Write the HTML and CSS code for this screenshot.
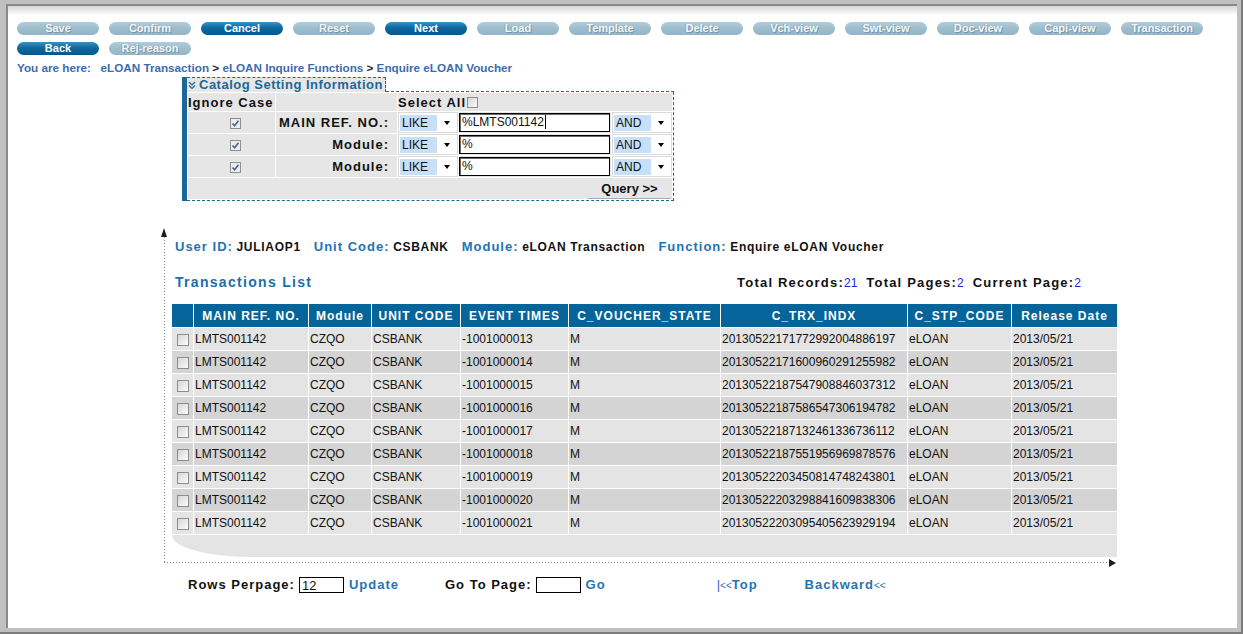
FILE: index.html
```html
<!DOCTYPE html>
<html>
<head>
<meta charset="utf-8">
<title>Enquire eLOAN Voucher</title>
<link rel="stylesheet" href="styles.css">
</head>
<body>
<div class="frame">
 <div class="page">
  <div class="toolbar">
   <div class="btnrow">
    <span class="btn off">Save</span>
    <span class="btn off">Confirm</span>
    <span class="btn on">Cancel</span>
    <span class="btn off">Reset</span>
    <span class="btn on">Next</span>
    <span class="btn off">Load</span>
    <span class="btn off">Template</span>
    <span class="btn off">Delete</span>
    <span class="btn off">Vch-view</span>
    <span class="btn off">Swt-view</span>
    <span class="btn off">Doc-view</span>
    <span class="btn off">Capi-view</span>
    <span class="btn off">Transaction</span>
   </div>
   <div class="btnrow">
    <span class="btn on">Back</span>
    <span class="btn off">Rej-reason</span>
   </div>
  </div>

  <div class="crumbs">You are here:&nbsp;&nbsp; <span>eLOAN Transaction</span> <span class="sep">&gt;</span> <span>eLOAN Inquire Functions</span> <span class="sep">&gt;</span> <span>Enquire eLOAN Voucher</span></div>

  <div class="catalog">
   <div class="cat-head">
    <div class="legend"><svg class="chev" width="8" height="9" viewBox="0 0 8 9"><polyline points="1,1 4,4 7,1" /><polyline points="1,4.5 4,7.5 7,4.5" /></svg>Catalog Setting Information</div>
    <div class="cat-fill"></div>
   </div>
   <div class="cat-body">
    <table class="cat-table">
     <colgroup><col class="c1"><col class="c2"><col class="c3"><col class="c4"><col class="c5"></colgroup>
     <tr class="hrow">
      <td>Ignore Case</td>
      <td></td>
      <td colspan="3">Select All<span class="box sm"></span></td>
     </tr>
     <tr>
      <td class="chk"><span class="box on"><svg width="9" height="9" viewBox="0 0 9 9"><polyline points="1.5,4.5 3.6,6.8 7.5,1.8"/></svg></span></td>
      <td class="lbl">MAIN REF. NO.:</td>
      <td><div class="sel"><span class="hl">LIKE</span><span class="arr"></span></div></td>
      <td><div class="field">%LMTS001142<span class="caret"></span></div></td>
      <td><div class="sel"><span class="hl">AND</span><span class="arr"></span></div></td>
     </tr>
     <tr>
      <td class="chk"><span class="box on"><svg width="9" height="9" viewBox="0 0 9 9"><polyline points="1.5,4.5 3.6,6.8 7.5,1.8"/></svg></span></td>
      <td class="lbl">Module:</td>
      <td><div class="sel"><span class="hl">LIKE</span><span class="arr"></span></div></td>
      <td><div class="field">%</div></td>
      <td><div class="sel"><span class="hl">AND</span><span class="arr"></span></div></td>
     </tr>
     <tr>
      <td class="chk"><span class="box on"><svg width="9" height="9" viewBox="0 0 9 9"><polyline points="1.5,4.5 3.6,6.8 7.5,1.8"/></svg></span></td>
      <td class="lbl">Module:</td>
      <td><div class="sel"><span class="hl">LIKE</span><span class="arr"></span></div></td>
      <td><div class="field">%</div></td>
      <td><div class="sel"><span class="hl">AND</span><span class="arr"></span></div></td>
     </tr>
     <tr class="qrow">
      <td colspan="5"><span class="query">Query &gt;&gt;</span></td>
     </tr>
    </table>
   </div>
  </div>

  <div class="listbox">
   <div class="userinfo"><span class="k">User ID:</span> <span class="v">JULIAOP1</span><span class="k g">Unit Code:</span> <span class="v">CSBANK</span><span class="k g">Module:</span> <span class="v">eLOAN Transaction</span><span class="k g">Function:</span> <span class="v">Enquire eLOAN Voucher</span></div>
   <div class="listhead">
    <span class="title">Transactions List</span>
    <span class="totals">Total Records:<span class="n">21</span><span class="tg">Total Pages:</span><span class="n">2</span><span class="tg">Current Page:</span><span class="n">2</span></span>
   </div>
   <div class="gridwrap">
    <table class="grid">
     <colgroup><col class="g0"><col class="g1"><col class="g2"><col class="g3"><col class="g4"><col class="g5"><col class="g6"><col class="g7"><col class="g8"></colgroup>
     <thead>
      <tr><th></th><th>MAIN REF. NO.</th><th>Module</th><th>UNIT CODE</th><th>EVENT TIMES</th><th>C_VOUCHER_STATE</th><th>C_TRX_INDX</th><th>C_STP_CODE</th><th>Release Date</th></tr>
     </thead>
     <tbody>
      <tr><td class="cb"><span class="box"></span></td><td>LMTS001142</td><td>CZQO</td><td>CSBANK</td><td>-1001000013</td><td>M</td><td>20130522171772992004886197</td><td>eLOAN</td><td>2013/05/21</td></tr>
      <tr><td class="cb"><span class="box"></span></td><td>LMTS001142</td><td>CZQO</td><td>CSBANK</td><td>-1001000014</td><td>M</td><td>20130522171600960291255982</td><td>eLOAN</td><td>2013/05/21</td></tr>
      <tr><td class="cb"><span class="box"></span></td><td>LMTS001142</td><td>CZQO</td><td>CSBANK</td><td>-1001000015</td><td>M</td><td>20130522187547908846037312</td><td>eLOAN</td><td>2013/05/21</td></tr>
      <tr><td class="cb"><span class="box"></span></td><td>LMTS001142</td><td>CZQO</td><td>CSBANK</td><td>-1001000016</td><td>M</td><td>20130522187586547306194782</td><td>eLOAN</td><td>2013/05/21</td></tr>
      <tr><td class="cb"><span class="box"></span></td><td>LMTS001142</td><td>CZQO</td><td>CSBANK</td><td>-1001000017</td><td>M</td><td>20130522187132461336736112</td><td>eLOAN</td><td>2013/05/21</td></tr>
      <tr><td class="cb"><span class="box"></span></td><td>LMTS001142</td><td>CZQO</td><td>CSBANK</td><td>-1001000018</td><td>M</td><td>20130522187551956969878576</td><td>eLOAN</td><td>2013/05/21</td></tr>
      <tr><td class="cb"><span class="box"></span></td><td>LMTS001142</td><td>CZQO</td><td>CSBANK</td><td>-1001000019</td><td>M</td><td>20130522203450814748243801</td><td>eLOAN</td><td>2013/05/21</td></tr>
      <tr><td class="cb"><span class="box"></span></td><td>LMTS001142</td><td>CZQO</td><td>CSBANK</td><td>-1001000020</td><td>M</td><td>20130522203298841609838306</td><td>eLOAN</td><td>2013/05/21</td></tr>
      <tr><td class="cb"><span class="box"></span></td><td>LMTS001142</td><td>CZQO</td><td>CSBANK</td><td>-1001000021</td><td>M</td><td>20130522203095405623929194</td><td>eLOAN</td><td>2013/05/21</td></tr>
     </tbody>
    </table>
    <div class="gridfoot"></div>
   </div>
  </div>

  <div class="pager">
   <span class="plbl">Rows Perpage:</span>
   <span class="pin">12</span>
   <span class="plink">Update</span>
   <span class="plbl goto">Go To Page:</span>
   <span class="pin"></span>
   <span class="plink">Go</span>
   <span class="plink top"><span class="bar">|</span><span class="lt">&lt;&lt;</span>Top</span>
   <span class="plink back">Backward<span class="lt">&lt;&lt;</span></span>
  </div>
 </div>
</div>
</body>
</html>
```

FILE: styles.css
```css
* { box-sizing: border-box; }
html, body { margin: 0; padding: 0; }
body {
  width: 1243px;
  height: 634px;
  overflow: hidden;
  background: #c0c0c0;
  font-family: "Liberation Sans", Arial, sans-serif;
  color: #111;
}

.frame {
  height: 634px;
  background: #c0c0c0;
  padding: 4px 4px 4px 6px;
  border-right: 2px solid #7b7b7b;
  border-bottom: 2px solid #7b7b7b;
}
.page {
  height: 100%;
  border-top: 2px solid #8a8a8a;
  border-left: 2px solid #8a8a8a;
  background: linear-gradient(#d6d6d6 0, #fff 9px);
}

/* toolbar */
.toolbar { padding: 16px 0 0 9px; }
.btnrow { display: flex; gap: 10px; }
.btnrow + .btnrow { margin-top: 7px; }
.btn {
  width: 82px;
  height: 13px;
  border-radius: 7px;
  font-size: 11px;
  font-weight: bold;
  line-height: 13px;
  text-align: center;
}
.btn.on {
  background: linear-gradient(#3a92c7, #0c69a0 45%, #05578a);
  color: #fff;
}
.btn.off {
  background: linear-gradient(#b1cddb, #9dbdcd 50%, #94b5c6);
  color: #f2f6f8;
  text-shadow: 1px 1px 0 #7996a6, -1px 0 0 #90adbc;
}

/* breadcrumb */
.crumbs {
  margin: 6px 0 0 9px;
  font-size: 11.7px;
  font-weight: bold;
  line-height: 14px;
  color: #3b6cae;
}
.crumbs .sep { color: #222; }

/* catalog panel */
.catalog {
  margin: 2px 0 0 174px;
  width: 492px;
  border-left: 5px solid #1b6898;
}
.cat-head { display: flex; height: 15px; }
.legend {
  display: flex;
  align-items: center;
  gap: 3px;
  height: 15px;
  padding: 0 2px 0 1px;
  border-top: 1px dashed #1b6898;
  border-right: 1px dashed #1b6898;
  background: #e6e6e6;
  color: #1b6898;
  font-size: 13px;
  font-weight: bold;
  letter-spacing: 0.5px;
  line-height: 14px;
}
.chev polyline { fill: none; stroke: #1b6898; stroke-width: 1.2; }
.cat-fill { flex: 1; border-bottom: 1px dashed #1b6898; }
.cat-body {
  border-right: 1px dashed #1b6898;
  border-bottom: 1px dashed #1b6898;
  background: #fff;
}
.cat-table {
  width: 486px;
  table-layout: fixed;
  border-spacing: 1px;
}
.cat-table col.c1 { width: 87px; }
.cat-table col.c2 { width: 121px; }
.cat-table col.c3 { width: 60px; }
.cat-table col.c4 { width: 152px; }
.cat-table col.c5 { width: 60px; }
.cat-table td {
  padding: 0;
  height: 21px;
  background: #e6e6e6;
  font-size: 13px;
  font-weight: bold;
  letter-spacing: 1px;
  white-space: nowrap;
}
.cat-table .hrow td { height: 18px; }
.cat-table td.chk { padding-left: 42px; }
.cat-table td.lbl { text-align: right; padding-right: 8px; }

.box {
  display: inline-block;
  width: 12px;
  height: 12px;
  border: 1px solid #8d8d8d;
  background: linear-gradient(135deg, #d6d6d6, #fbfbfb);
  vertical-align: middle;
}
.box.sm { width: 11px; height: 11px; margin-left: 1px; vertical-align: -1px; }
.box.on {
  width: 11px;
  height: 11px;
  background: #ececec;
  border-color: #8e9090;
  position: relative;
  vertical-align: middle;
}
.box.on svg { position: absolute; left: 0; top: 0; }
.box.on polyline { fill: none; stroke: #4b618c; stroke-width: 1.6; }

.sel {
  display: flex;
  align-items: center;
  height: 21px;
  padding-left: 1px;
  background: #fff;
  border: 1px solid #dadada;
  font-size: 12px;
  font-weight: normal;
  letter-spacing: 0;
}
.sel .hl {
  width: 37px;
  height: 16px;
  line-height: 16px;
  padding-left: 2px;
  background: #c7dff9;
}
.sel .arr {
  margin-left: 7px;
  width: 0;
  height: 0;
  border-left: 3.5px solid transparent;
  border-right: 3.5px solid transparent;
  border-top: 4px solid #000;
}
.field {
  width: 151px;
  height: 19px;
  padding-left: 2px;
  border: 1px solid #000;
  box-shadow: inset 1px 1px 0 #6a6a6a;
  background: #fff;
  font-size: 12px;
  font-weight: normal;
  letter-spacing: 0;
  line-height: 17px;
}
.caret {
  display: inline-block;
  width: 1px;
  height: 14px;
  margin-left: 1px;
  background: #000;
  vertical-align: -3px;
}
.cat-table .qrow td { text-align: right; padding-right: 1px; }
.query {
  display: inline-block;
  width: 83px;
  height: 20px;
  line-height: 19px;
  text-align: center;
  letter-spacing: 0;
  border-bottom: 1px solid #a9a9a9;
}

/* list box with dotted axes */
.listbox {
  position: relative;
  margin: 36px 0 0 156px;
  width: 946px;
  padding: 2px 0 6px 8px;
  background-image:
    linear-gradient(#8a8a8a 1px, transparent 1px),
    linear-gradient(90deg, #8a8a8a 1px, transparent 1px);
  background-size: 1px 3px, 3px 1px;
  background-repeat: repeat-y, repeat-x;
  background-position: 0 0, 0 100%;
}
.listbox::before {
  content: "";
  position: absolute;
  left: -3px;
  top: -9px;
  border-left: 3px solid transparent;
  border-right: 3px solid transparent;
  border-bottom: 9px solid #1e1e1e;
}
.listbox::after {
  content: "";
  position: absolute;
  right: -6px;
  bottom: -4px;
  border-top: 4px solid transparent;
  border-bottom: 4px solid transparent;
  border-left: 7px solid #1e1e1e;
}
.userinfo {
  padding-left: 3px;
  font-size: 13px;
  line-height: 15px;
  white-space: nowrap;
}
.k { color: #2273b5; font-weight: bold; letter-spacing: 1px; }
.k.g { margin-left: 13px; }
.v { color: #111; font-size: 12px; font-weight: bold; letter-spacing: 0.7px; }

.listhead {
  display: flex;
  justify-content: space-between;
  align-items: baseline;
  margin: 20px 29px 0 3px;
  line-height: 15px;
}
.title {
  color: #1c6ea6;
  font-size: 14px;
  font-weight: bold;
  letter-spacing: 1.3px;
}
.totals {
  font-size: 13px;
  font-weight: bold;
  letter-spacing: 1.2px;
  color: #111;
}
.totals .n { color: #2424d8; font-weight: normal; font-size: 12px; letter-spacing: 0; }
.totals .tg { margin-left: 9px; }

.gridwrap { margin-top: 12px; }
.grid {
  margin-left: -1px;
  width: 947px;
  table-layout: fixed;
  border-spacing: 1px;
  background: #fff;
}
.grid col.g0 { width: 21px; }
.grid col.g1 { width: 114px; }
.grid col.g2 { width: 62px; }
.grid col.g3 { width: 88px; }
.grid col.g4 { width: 107px; }
.grid col.g5 { width: 151px; }
.grid col.g6 { width: 186px; }
.grid col.g7 { width: 103px; }
.grid col.g8 { width: 105px; }
.grid th {
  height: 23px;
  padding: 0;
  background: #05659b;
  color: #fff;
  font-size: 12px;
  font-weight: bold;
  letter-spacing: 1px;
  text-align: center;
  white-space: nowrap;
  overflow: hidden;
}
.grid td {
  height: 22px;
  padding: 0 0 0 1px;
  font-size: 12px;
  white-space: nowrap;
  overflow: hidden;
  background: #e4e4e4;
}
.grid tbody tr:nth-child(even) td { background: #d4d4d4; }
.grid td.cb { padding: 6px 0 0 5px; vertical-align: top; }
.grid td.cb .box { display: block; }
.gridfoot {
  width: 945px;
  height: 22px;
  background: #e4e4e4;
  border-bottom-left-radius: 78px 22px;
}

/* pager */
.pager {
  display: flex;
  align-items: center;
  height: 17px;
  margin-top: 13px;
  padding-left: 180px;
  font-size: 13px;
  font-weight: bold;
  letter-spacing: 1px;
  white-space: nowrap;
}
.pin {
  width: 45px;
  height: 16px;
  margin-left: 4px;
  padding-left: 2px;
  border: 1px solid #000;
  font-weight: normal;
  letter-spacing: 0;
  line-height: 15px;
  background: #fff;
}
.plink { color: #1f74b8; margin-left: 5px; }
.goto { margin-left: 46px; }
.plink.top { margin-left: 111px; }
.plink.back { margin-left: 47px; }
.bar { color: #3f5fcf; font-weight: normal; letter-spacing: 0; }
.lt { font-size: 10px; font-weight: normal; letter-spacing: 0; }
```
